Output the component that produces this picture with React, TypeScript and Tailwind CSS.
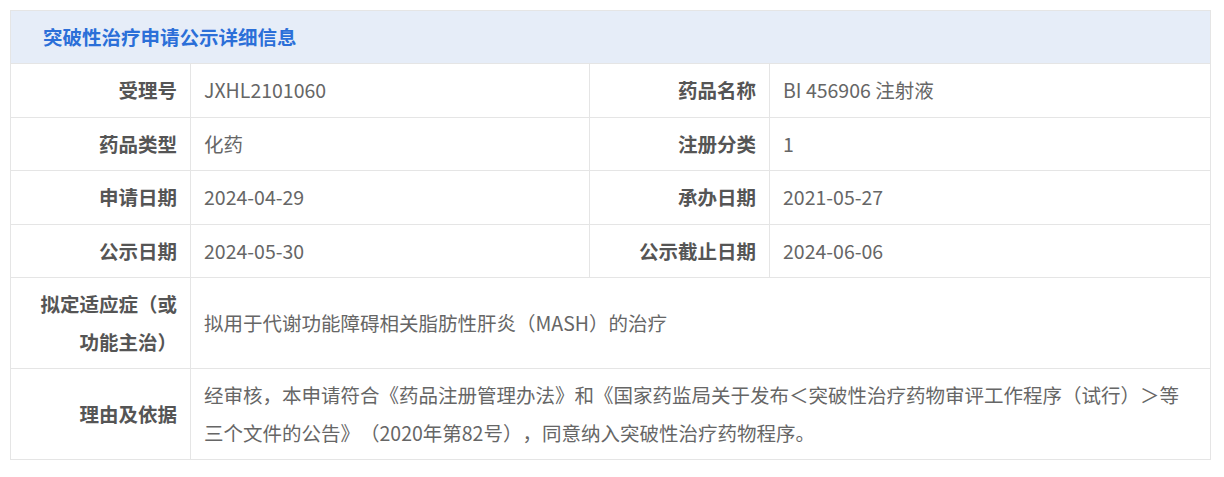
const rows: [string, string, string, string][] = [
  ["受理号", "JXHL2101060", "药品名称", "BI 456906 注射液"],
  ["药品类型", "化药", "注册分类", "1"],
  ["申请日期", "2024-04-29", "承办日期", "2021-05-27"],
  ["公示日期", "2024-05-30", "公示截止日期", "2024-06-06"],
]

const labelCls =
  "border border-[#e5e5e5] text-right font-bold text-[#555555] px-[13px] py-[7px] align-middle"
const valueCls = "border border-[#e5e5e5] text-left text-[#666666] px-[13px] py-[7px] align-middle"

export default function App() {
  return (
    <div
      className="bg-white w-[1224px] h-[477px] pt-[10px] pl-[10px] text-[19.5px] leading-[38px] [text-spacing-trim:space-all]"
      style={{ fontFamily: '"Noto Sans CJK SC", "Noto Sans", sans-serif' }}
    >
      <table className="w-[1200px] border-collapse table-fixed">
        <colgroup>
          <col className="w-[180px]" />
          <col className="w-[399px]" />
          <col className="w-[180px]" />
          <col className="w-[441px]" />
        </colgroup>
        <thead>
          <tr>
            <th
              colSpan={4}
              className="border border-[#e5e5e5] bg-[#e6edf8] h-[53px] p-0 text-left pl-[32px] font-bold text-[#2b6fd8]"
            >
              突破性治疗申请公示详细信息
            </th>
          </tr>
        </thead>
        <tbody>
          {rows.map((r) => (
            <tr key={r[0]} className="h-[53.5px]">
              <td className={labelCls}>{r[0]}</td>
              <td className={valueCls}>{r[1]}</td>
              <td className={labelCls}>{r[2]}</td>
              <td className={valueCls}>{r[3]}</td>
            </tr>
          ))}
          <tr className="h-[91px]">
            <td className={labelCls}>
              拟定适应症（或
              <br />
              功能主治）
            </td>
            <td colSpan={3} className={valueCls}>
              拟用于代谢功能障碍相关脂肪性肝炎（MASH）的治疗
            </td>
          </tr>
          <tr className="h-[91px]">
            <td className={labelCls}>理由及依据</td>
            <td colSpan={3} className={valueCls}>
              经审核，本申请符合《药品注册管理办法》和《国家药监局关于发布＜突破性治疗药物审评工作程序（试行）＞等
              <br />
              三个文件的公告》（2020年第82号），同意纳入突破性治疗药物程序。
            </td>
          </tr>
        </tbody>
      </table>
    </div>
  )
}
